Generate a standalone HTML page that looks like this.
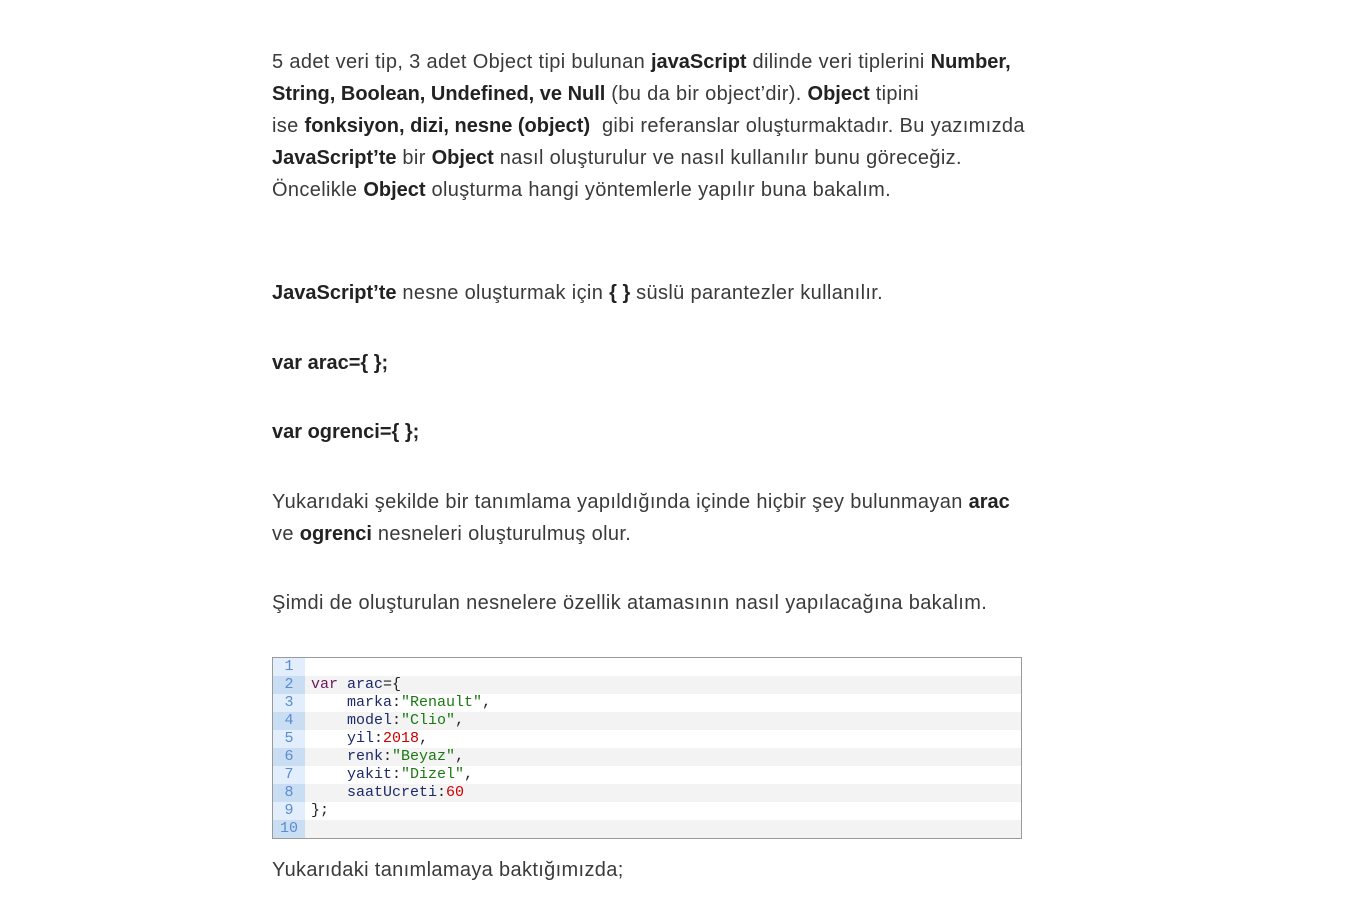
<!DOCTYPE html>
<html><head><meta charset="utf-8"><style>
body{margin:0;background:#fff;width:1350px;height:904px;overflow:hidden;font-family:"Liberation Sans",sans-serif;color:#3a3a3a}
.t{position:absolute;left:272px;font-size:20px;letter-spacing:0.35px;line-height:32px;white-space:nowrap}
b{color:#222;font-weight:bold;letter-spacing:0}
.code{position:absolute;left:272px;top:657px;width:748px;height:180px;border:1px solid #9a9a9a;font-family:"Liberation Mono",monospace;font-size:15px}
.r{height:18px;line-height:18px;display:flex;white-space:pre}
.r .n{width:32px;text-align:center;color:#5b8bd0;background:#e2eefb}
.r:nth-child(even) .n{background:#c9ddf3}
.r:nth-child(even){background:#f3f3f3}
.r .c{padding-left:6px;color:#222}
.k{color:#6a1a5a}.i{color:#1c2a6b}.s{color:#1a7a10}.d{color:#cc0000}
</style></head><body>
<div class="t" style="top:46px">5 adet veri tip, 3 adet Object tipi bulunan <b>javaScript</b> dilinde veri tiplerini <b>Number,</b></div>
<div class="t" style="top:78px"><b>String, Boolean, Undefined, ve Null</b> (bu da bir object’dir). <b>Object</b> tipini</div>
<div class="t" style="top:110px">ise <b>fonksiyon, dizi, nesne (object)</b>&nbsp; gibi referanslar oluşturmaktadır. Bu yazımızda</div>
<div class="t" style="top:142px"><b>JavaScript’te</b> bir <b>Object</b> nasıl oluşturulur ve nasıl kullanılır bunu göreceğiz.</div>
<div class="t" style="top:174px">Öncelikle <b>Object</b> oluşturma hangi yöntemlerle yapılır buna bakalım.</div>
<div class="t" style="top:277px"><b>JavaScript’te</b> nesne oluşturmak için <b>{ }</b> süslü parantezler kullanılır.</div>
<div class="t" style="top:347px"><b>var arac={ };</b></div>
<div class="t" style="top:416px"><b>var ogrenci={ };</b></div>
<div class="t" style="top:486px">Yukarıdaki şekilde bir tanımlama yapıldığında içinde hiçbir şey bulunmayan <b>arac</b></div>
<div class="t" style="top:518px">ve <b>ogrenci</b> nesneleri oluşturulmuş olur.</div>
<div class="t" style="top:587px">Şimdi de oluşturulan nesnelere özellik atamasının nasıl yapılacağına bakalım.</div>
<div class="code">
<div class="r"><span class="n">1</span><span class="c"></span></div>
<div class="r"><span class="n">2</span><span class="c"><span class="k">var</span> <span class="i">arac</span>={</span></div>
<div class="r"><span class="n">3</span><span class="c">    <span class="i">marka</span>:<span class="s">"Renault"</span>,</span></div>
<div class="r"><span class="n">4</span><span class="c">    <span class="i">model</span>:<span class="s">"Clio"</span>,</span></div>
<div class="r"><span class="n">5</span><span class="c">    <span class="i">yil</span>:<span class="d">2018</span>,</span></div>
<div class="r"><span class="n">6</span><span class="c">    <span class="i">renk</span>:<span class="s">"Beyaz"</span>,</span></div>
<div class="r"><span class="n">7</span><span class="c">    <span class="i">yakit</span>:<span class="s">"Dizel"</span>,</span></div>
<div class="r"><span class="n">8</span><span class="c">    <span class="i">saatUcreti</span>:<span class="d">60</span></span></div>
<div class="r"><span class="n">9</span><span class="c">};</span></div>
<div class="r"><span class="n">10</span><span class="c"></span></div>
</div>
<div class="t" style="top:854px">Yukarıdaki tanımlamaya baktığımızda;</div>
</body></html>
